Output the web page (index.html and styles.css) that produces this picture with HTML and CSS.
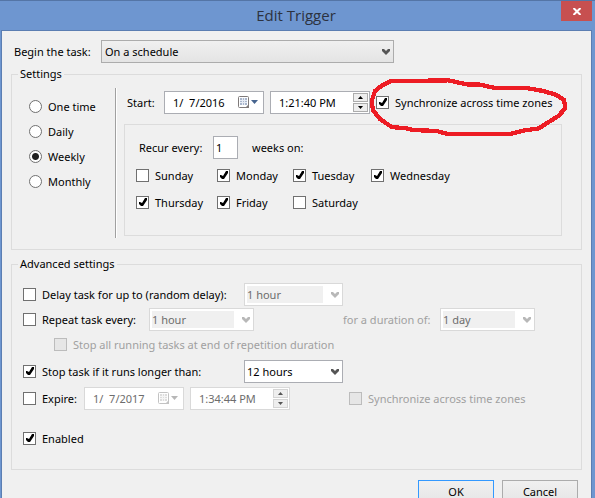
FILE: index.html
```html
<!DOCTYPE html>
<html lang="en">
<head>
<meta charset="utf-8">
<title>Edit Trigger</title>
<link rel="stylesheet" href="styles.css">
</head>
<body>
<svg class="defs" aria-hidden="true">
  <symbol id="chevron" viewBox="0 0 8 6"><path d="M0 0h2l2 2 2-2h2v2L4 6 0 2z" fill="currentColor"/></symbol>
  <symbol id="calendar" viewBox="0 0 20 12">
    <rect x="0.5" y="0.5" width="10" height="11" rx="1" fill="#fff" stroke="#7f7a7a"/>
    <path d="M2 2h7v7H2z" fill="#a9b6cc"/>
    <path d="M2 4.5h7M2 6.5h7M4.5 2v7M6.5 2v7" stroke="#e6ebf4" stroke-width="1"/>
    <path d="M7 12l4-4v4z" fill="#7f7a7a"/>
    <path d="M13 4h7l-3.5 4z" fill="#46648f"/>
  </symbol>
</svg>
<main class="window">
  <header class="titlebar">
    <h1>Edit Trigger</h1>
    <button class="close" type="button" aria-label="Close"><svg width="8" height="7" viewBox="0 0 8 7"><path d="M0.5 0l7 7M7.5 0l-7 7" stroke="#fff" stroke-width="2"/></svg></button>
  </header>
  <form class="client">
    <div class="begin">
      <label for="begin">Begin the task:</label>
      <span class="combo combo-button"><select id="begin"><option>On a schedule</option></select><svg><use href="#chevron"/></svg></span>
    </div>

    <fieldset class="settings">
      <legend>Settings</legend>
      <div class="frequency">
        <label><input type="radio" name="freq">One time</label>
        <label><input type="radio" name="freq">Daily</label>
        <label><input type="radio" name="freq" checked>Weekly</label>
        <label><input type="radio" name="freq">Monthly</label>
      </div>
      <div class="schedule">
        <div class="start">
          <label for="start-date">Start:</label>
          <span class="field date"><input id="start-date" type="text" value="1/  7/2016"><svg><use href="#calendar"/></svg></span>
          <span class="field time"><input type="text" value="1:21:40 PM" aria-label="Start time"><span class="spin"><button type="button" aria-label="Up"><svg viewBox="0 0 5 3"><path d="M0 3h5L2.500 0z"/></svg></button><button type="button" aria-label="Down"><svg viewBox="0 0 5 3"><path d="M0 0h5L2.500 3z"/></svg></button></span></span>
          <label class="check marked"><input type="checkbox" checked>Synchronize across time zones
            <svg class="scribble" viewBox="219 228 612 180" aria-hidden="true"><path d="M285 241L460 238L515 250L555 251L600 261L700 262L745 270L785 282L807 297L811 322L790 345L755 367L732 382L690 388L650 398L455 398L425 390L355 387L335 382L290 378L255 354L234 328L230 300L240 270L260 254Z"/></svg>
          </label>
        </div>
        <div class="weekly">
          <div class="recur">
            <label for="weeks">Recur every:</label>
            <input id="weeks" type="text" value="1">
            <span>weeks on:</span>
          </div>
          <div class="days">
            <label class="check"><input type="checkbox">Sunday</label>
            <label class="check"><input type="checkbox" checked>Monday</label>
            <label class="check"><input type="checkbox" checked>Tuesday</label>
            <label class="check"><input type="checkbox" checked>Wednesday</label>
            <label class="check"><input type="checkbox" checked>Thursday</label>
            <label class="check"><input type="checkbox" checked>Friday</label>
            <label class="check"><input type="checkbox">Saturday</label>
          </div>
        </div>
      </div>
    </fieldset>

    <fieldset class="advanced">
      <legend>Advanced settings</legend>
      <div class="rows">
        <div class="row wide">
          <label class="check"><input type="checkbox">Delay task for up to (random delay):</label>
          <span class="combo"><select disabled aria-label="Random delay"><option>1 hour</option></select><svg><use href="#chevron"/></svg></span>
        </div>
        <div class="row repeat">
          <label class="check"><input type="checkbox">Repeat task every:</label>
          <span class="combo"><select disabled aria-label="Repeat interval"><option>1 hour</option></select><svg><use href="#chevron"/></svg></span>
          <label class="off" for="duration">for a duration of:</label>
          <span class="combo"><select id="duration" disabled><option>1 day</option></select><svg><use href="#chevron"/></svg></span>
        </div>
        <div class="row nested">
          <label class="check off"><input type="checkbox" disabled>Stop all running tasks at end of repetition duration</label>
        </div>
        <div class="row wide">
          <label class="check"><input type="checkbox" checked>Stop task if it runs longer than:</label>
          <span class="combo"><select aria-label="Time limit"><option>12 hours</option></select><svg><use href="#chevron"/></svg></span>
        </div>
        <div class="row expire">
          <label class="check"><input type="checkbox">Expire:</label>
          <span class="field date"><input type="text" value="1/  7/2017" disabled aria-label="Expiry date"><svg><use href="#calendar"/></svg></span>
          <span class="field time"><input type="text" value="1:34:44 PM" disabled aria-label="Expiry time"><span class="spin"><button type="button" disabled aria-label="Up"><svg viewBox="0 0 5 3"><path d="M0 3h5L2.500 0z"/></svg></button><button type="button" disabled aria-label="Down"><svg viewBox="0 0 5 3"><path d="M0 0h5L2.500 3z"/></svg></button></span></span>
          <label class="check off"><input type="checkbox" disabled>Synchronize across time zones</label>
        </div>
        <div class="row">
          <label class="check"><input type="checkbox" checked>Enabled</label>
        </div>
      </div>
    </fieldset>

    <footer class="actions">
      <button class="default" type="button">OK</button>
      <button type="button">Cancel</button>
    </footer>
  </form>
</main>
</body>
</html>
```

FILE: styles.css
```css
* { box-sizing: border-box; }

body, input, select, button {
  font: 11px/16px "Noto Sans", sans-serif;
  color: #000;
}

body {
  margin: 0;
  height: 100vh;
  overflow: hidden;
  background: #6e96d0;
}

.defs { position: absolute; width: 0; height: 0; }

.window { border-top: 1px solid #5475a6; }

.titlebar {
  display: grid;
  grid-template-columns: 1fr auto 1fr;
  align-items: start;
  height: 29px;
  padding-right: 3px;
}

h1 {
  grid-column: 2;
  margin: 0;
  font: 15px/29px "Open Sans", sans-serif;
  color: #2c3240;
}

.close {
  display: grid;
  place-items: center;
  justify-self: end;
  width: 31px;
  height: 20px;
  padding: 0;
  border: 0;
  background: #c75050;
}

.client {
  margin: 0 3px 0 1px;
  padding: 9px 9px 12px;
  border: 1px solid #5b7eb2;
  background: #f0f0f0;
}

.begin {
  display: grid;
  grid-template-columns: 87px 293px;
  align-items: center;
  padding-left: 3px;
}

.combo, .field { position: relative; display: block; height: 23px; }

select, input[type="text"] {
  appearance: none;
  display: block;
  width: 100%;
  height: 23px;
  margin: 0;
  border: 1px solid #abadb3;
  border-radius: 0;
  background: #fff;
}

select { padding: 0 20px 0 2px; }
.combo svg { position: absolute; right: 4px; top: 9px; width: 8px; height: 6px; color: #555; pointer-events: none; }
.combo-button select { padding-left: 3px; border-color: #acacac; background: linear-gradient(#f0f0f0, #e4e4e4); }

select:disabled {
  border-color: #d9d9d9;
  background: linear-gradient(#f0f0f0, #f0f0f0) 2px 2px / calc(100% - 21px) 17px no-repeat #fff;
  color: #6d6d6d;
  opacity: 1;
}
select:disabled + svg { color: #b8b8b8; }

.field input { padding: 0 0 0 8px; white-space: pre; }
.field input:disabled { border-color: #d9d9d9; color: #6d6d6d; }
.date svg { position: absolute; right: 6px; top: 5px; width: 20px; height: 12px; }
.date input:disabled + svg { opacity: .45; filter: grayscale(1); }

.spin { position: absolute; top: 2px; right: 2px; display: grid; gap: 1px; width: 15px; }
.spin button {
  display: grid;
  place-items: center;
  height: 9px;
  padding: 0;
  border: 1px solid #acacac;
  background: #eee;
}
.spin svg { width: 5px; height: 3px; fill: #000; }
.spin button:disabled { border-color: #d4d4d4; }
.spin button:disabled svg { fill: #555; }

fieldset {
  min-width: 0;
  margin: 3px 0 0;
  padding: 0;
  border: 1px solid #dcdcdc;
}
legend { margin-left: 6px; padding: 0 2px; }

.settings {
  display: grid;
  grid-template-columns: 105px 1fr;
  padding: 6px 19px 11px 0;
}

.frequency {
  display: grid;
  grid-auto-rows: 25px;
  height: 150px;
  padding: 6px 0 0 17px;
  border-right: 1px solid #fff;
  box-shadow: inset -1px 0 #a0a0a0;
}
.frequency label { display: flex; align-items: center; gap: 6px; }

input[type="radio"], input[type="checkbox"] {
  appearance: none;
  flex: none;
  width: 13px;
  height: 13px;
  margin: 0;
  border: 1px solid #707070;
  background: #fff;
}
input[type="radio"] { border-radius: 50%; }
input[type="radio"]:checked { background: radial-gradient(circle, #212121 3px, #fff 4px); }
input[type="checkbox"]:checked::before {
  content: "";
  display: block;
  width: 11px;
  height: 11px;
  background: #000;
  clip-path: polygon(2px 5px, 3px 5px, 5px 6px, 8px 1px, 10px 1px, 10px 3px, 6px 9px, 4px 9px, 2px 7px);
}
input[type="checkbox"]:disabled { border-color: #bcbcbc; background: #e6e6e6; }

.check { display: flex; align-items: center; gap: 6px; white-space: nowrap; }
.off { color: #a0a0a0; }

.schedule { padding: 3px 0 0 7px; }
.start {
  display: grid;
  grid-template-columns: 31px 100px 100px auto;
  gap: 6px;
  align-items: center;
  justify-content: start;
  padding-left: 3px;
}

.marked { position: relative; }
.scribble {
  position: absolute;
  left: -8px;
  top: -18px;
  width: 204px;
  height: 60px;
  fill: none;
  stroke: #ed1c24;
  stroke-width: 13;
  stroke-linejoin: round;
  shape-rendering: crispEdges;
  pointer-events: none;
}

.weekly {
  height: 112px;
  margin-top: 10px;
  padding: 11px;
  border: 1px solid #dcdcdc;
}
.recur {
  display: grid;
  grid-template-columns: 74px 25px auto;
  align-items: center;
  justify-content: start;
  padding-left: 3px;
}
.recur input { padding: 0 2px; }
.recur span { padding-left: 14px; }
.days {
  display: grid;
  grid-template-columns: 81px 76px 78px auto;
  grid-auto-rows: 27px;
  justify-content: start;
  padding-top: 3px;
}

.advanced { margin-top: 6px; }
.rows {
  display: grid;
  grid-template-rows: 25px 25px 27px 27px 40px 23px;
  padding: 11px 11px 19px;
}
.row { display: grid; align-items: center; justify-content: start; height: 23px; }
.wide { grid-template-columns: 221px 99px; }
.repeat { grid-template-columns: 126px 105px 186px 95px; }
.repeat .off { padding-left: 89px; }
.nested { padding-left: 31px; }
.expire { grid-template-columns: 61px 100px 100px auto; }
.expire .time { margin-left: 6px; margin-right: -6px; }
.expire .off { padding-left: 65px; }

.actions { display: flex; justify-content: flex-end; gap: 8px; padding: 10px 4px 0 0; }
.actions button {
  width: 76px;
  height: 24px;
  border: 1px solid #acacac;
  background: linear-gradient(#f0f0f0, #e5e5e5);
}
.actions .default { border-color: #3399ff; }
```
